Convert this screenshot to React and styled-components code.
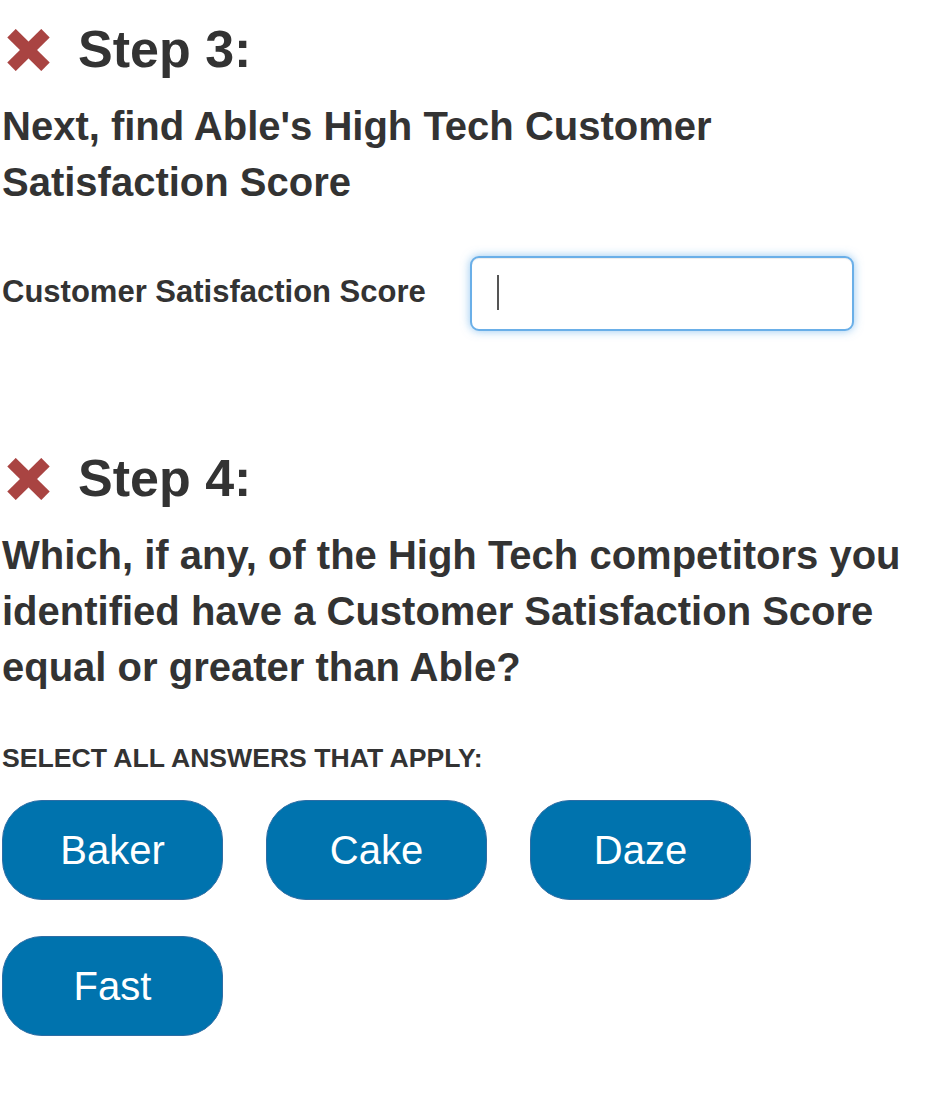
import React from 'react';
import styled, { createGlobalStyle } from 'styled-components';

const GlobalStyle = createGlobalStyle`
  body {
    margin: 0;
    background: #fff;
    font-family: "Liberation Sans", Arial, Helvetica, sans-serif;
    color: #333;
  }
`;

const Page = styled.div`
  padding: 0 2px;
`;

const Step = styled.section`
  margin-top: ${(p) => p.$top}px;
`;

const StepHeading = styled.h2`
  display: flex;
  align-items: center;
  gap: 28px;
  margin: 0;
  padding-left: 5px;
  font-size: 52px;
  line-height: 55px;
  font-weight: 700;
`;

const Prompt = styled.h3`
  margin: 21px 0 0;
  font-size: 40px;
  line-height: 56px;
  font-weight: 700;
  max-width: 920px;
`;

const FieldRow = styled.div`
  display: flex;
  align-items: center;
  gap: 44px;
  margin-top: 46px;
`;

const Label = styled.label`
  font-size: 31px;
  font-weight: 700;
  padding-bottom: 3px;
`;

const InputWrap = styled.div`
  position: relative;
`;

const Input = styled.input`
  display: block;
  box-sizing: border-box;
  width: 384px;
  height: 75px;
  border: 2px solid #6aafe8;
  border-radius: 9px;
  outline: none;
  box-shadow: inset 0 1px 1px rgba(0, 0, 0, 0.075), 0 0 10px rgba(102, 175, 233, 0.7);
  padding: 0 26px;
  font: inherit;
  font-size: 30px;
  color: #555;
`;

const Caret = styled.span`
  position: absolute;
  left: 27px;
  top: 19px;
  width: 2px;
  height: 35px;
  background: #555;
`;

const Instructions = styled.div`
  margin-top: 48px;
  font-size: 26.6px;
  line-height: 31px;
  font-weight: 700;
  text-transform: uppercase;
`;

const Options = styled.div`
  display: flex;
  flex-wrap: wrap;
  column-gap: 43px;
  row-gap: 36px;
  margin-top: 26px;
`;

const Option = styled.button`
  width: 221px;
  height: 100px;
  border: 1px solid #2e6da4;
  border-radius: 40px;
  background: #0073ae;
  color: #fff;
  font-family: inherit;
  font-size: 40px;
  cursor: pointer;
  padding: 0;
`;

const Cross = () => (
  <svg width="43" height="42" viewBox="0 0 43 42" aria-hidden="true">
    <g stroke="#a94442" strokeWidth="12" strokeLinecap="butt">
      <line x1="4.5" y1="4.2" x2="38.5" y2="37.8" />
      <line x1="38.5" y1="4.2" x2="4.5" y2="37.8" />
    </g>
  </svg>
);

const competitors = ['Baker', 'Cake', 'Daze', 'Fast'];

export default function App() {
  return (
    <Page>
      <GlobalStyle />
      <Step $top={22}>
        <StepHeading>
          <Cross />
          Step 3:
        </StepHeading>
        <Prompt>Next, find Able's High Tech Customer Satisfaction Score</Prompt>
        <FieldRow>
          <Label htmlFor="score">Customer Satisfaction Score</Label>
          <InputWrap>
            <Input id="score" type="text" />
            <Caret />
          </InputWrap>
        </FieldRow>
      </Step>

      <Step $top={120}>
        <StepHeading>
          <Cross />
          Step 4:
        </StepHeading>
        <Prompt>
          Which, if any, of the High Tech competitors you identified have a Customer
          Satisfaction Score equal or greater than Able?
        </Prompt>
        <Instructions>Select all answers that apply:</Instructions>
        <Options>
          {competitors.map((name) => (
            <Option key={name} type="button">
              {name}
            </Option>
          ))}
        </Options>
      </Step>
    </Page>
  );
}
